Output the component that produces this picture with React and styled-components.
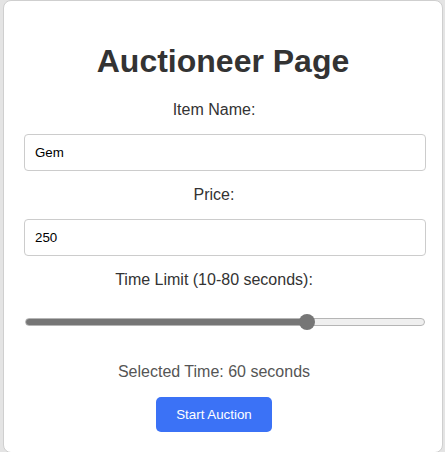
import React, { useState } from 'react';
import styled, { createGlobalStyle } from 'styled-components';

const GlobalStyle = createGlobalStyle`
  body {
    margin: 0;
    background: #e4e4e4;
    font-family: 'Liberation Sans', Arial, sans-serif;
  }
`;

const Card = styled.div`
  box-sizing: border-box;
  width: 440px;
  margin: 0 0 0 3px;
  padding: 20px;
  background: #fff;
  border: 1px solid #cfcfcf;
  border-radius: 8px;
`;

const Title = styled.h1`
  margin: 21.5px 0;
  font-size: 32px;
  font-weight: bold;
  color: #333;
  text-align: center;
`;

const Form = styled.form`
  width: 380px;
  text-align: center;
`;

const Label = styled.label`
  display: block;
  margin-bottom: 15px;
  font-size: 16px;
  color: #333;
`;

const Input = styled.input`
  display: block;
  width: 100%;
  margin: 0 0 15px;
  padding: 10px;
  font-family: 'Liberation Sans', Arial, sans-serif;
  font-size: 13.33px;
  color: #000;
  border: 1px solid #ccc;
  border-radius: 4px;
  outline: none;
`;

const Range = styled.input`
  -webkit-appearance: none;
  appearance: none;
  display: block;
  width: 400px;
  height: 36px;
  margin: 0 0 23px 1px;
  padding: 0;
  background: transparent;
  outline: none;

  &::-webkit-slider-runnable-track {
    height: 8px;
    box-sizing: border-box;
    border: 1px solid #b5b5b5;
    border-radius: 4px;
    background: linear-gradient(
      to right,
      #767676 ${(p) => p.$fill}%,
      #efefef ${(p) => p.$fill}%
    );
  }

  &::-webkit-slider-thumb {
    -webkit-appearance: none;
    width: 16px;
    height: 16px;
    margin-top: -5px;
    border-radius: 50%;
    background: #767676;
    border: none;
  }
`;

const Selected = styled.p`
  margin: 0 0 16px;
  font-size: 16px;
  color: #555;
`;

const Button = styled.button`
  padding: 10px 20px;
  font-family: 'Liberation Sans', Arial, sans-serif;
  font-size: 13.33px;
  color: #fff;
  background: #3b72f6;
  border: none;
  border-radius: 5px;
  cursor: pointer;
`;

export default function App() {
  const [name, setName] = useState('Gem');
  const [price, setPrice] = useState('250');
  const [time, setTime] = useState(60);

  const ratio = (time - 10) / 70;
  const fill = ((8 + ratio * 384) / 400) * 100;

  return (
    <>
      <GlobalStyle />
      <Card>
        <Title>Auctioneer Page</Title>
        <Form onSubmit={(e) => e.preventDefault()}>
          <Label>Item Name:</Label>
          <Input
            type='text'
            value={name}
            onChange={(e) => setName(e.target.value)}
          />
          <Label>Price:</Label>
          <Input
            type='number'
            value={price}
            onChange={(e) => setPrice(e.target.value)}
          />
          <Label>Time Limit (10-80 seconds):</Label>
          <Range
            type='range'
            min='10'
            max='80'
            value={time}
            $fill={fill}
            onChange={(e) => setTime(Number(e.target.value))}
          />
          <Selected>Selected Time: {time} seconds</Selected>
          <Button type='submit'>Start Auction</Button>
        </Form>
      </Card>
    </>
  );
}
